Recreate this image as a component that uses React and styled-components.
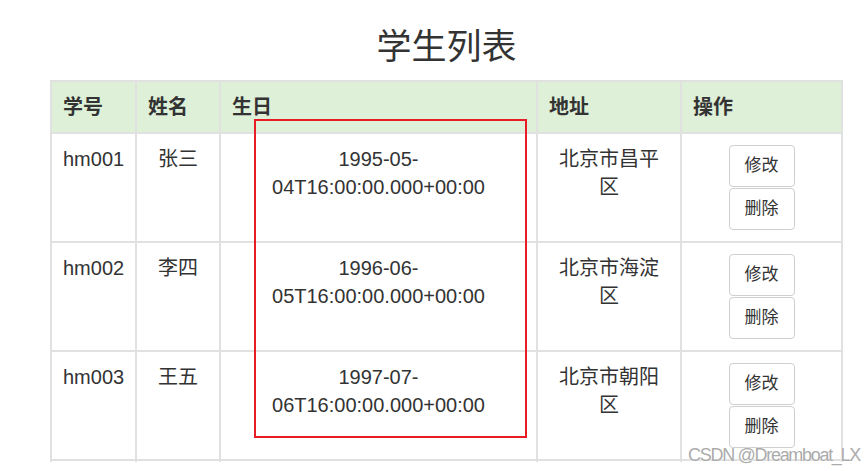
import React from "react";
import styled, { createGlobalStyle } from "styled-components";

const GlobalStyle = createGlobalStyle`
  *, *::before, *::after { box-sizing: border-box; }
  html, body { margin: 0; padding: 0; background: #fff; }
  body {
    font-family: "Liberation Sans", "Noto Sans CJK SC", Arial, sans-serif;
    color: #333;
  }
`;

const Page = styled.div`
  position: relative;
  width: 864px;
  height: 471px;
  overflow: hidden;
  background: #fff;
`;

const Title = styled.h2`
  margin: 0;
  padding-top: 28px;
  width: 793px;
  margin-left: 50px;
  text-align: center;
  font-size: 35px;
  line-height: 38px;
  font-weight: 400;
  color: #333;
`;

const TableClip = styled.div`
  margin-top: 14px;
  margin-left: 50px;
  width: 793px;
  height: 382px;
  overflow: hidden;
`;

const Table = styled.table`
  width: 793px;
  table-layout: fixed;
  border-collapse: separate;
  border-spacing: 0;
  border-left: 2px solid #e1e1e1;
  border-top: 2px solid #e1e1e1;
  font-size: 20px;
  line-height: 28px;
`;

const Th = styled.th`
  width: ${(p) => p.$w}px;
  padding: 11px 11px;
  text-align: left;
  font-weight: 700;
  background: #dff0d8;
  color: #333;
  border-right: 2px solid #e1e1e1;
  border-bottom: 2px solid #e1e1e1;
`;

const Td = styled.td`
  padding: 11px ${(p) => (p.$center ? 14 : 11)}px;
  text-align: ${(p) => (p.$center ? "center" : "left")};
  vertical-align: top;
  color: #333;
  border-right: 2px solid #e1e1e1;
  border-bottom: 2px solid #e1e1e1;
  height: ${(p) => (p.$h ? `${p.$h}px` : "auto")};
`;

const Actions = styled.div`
  display: flex;
  flex-direction: column;
  align-items: center;
  gap: 1px;
`;

const Button = styled.button`
  height: 42px;
  padding: 7px 15px;
  font-family: "Liberation Sans", "Noto Sans CJK SC", sans-serif;
  font-size: 17px;
  line-height: 26px;
  color: #333;
  background: #fff;
  border: 1px solid #cfcfcf;
  border-radius: 4px;
`;

const Highlight = styled.div`
  position: absolute;
  left: 254px;
  top: 119px;
  width: 273px;
  height: 319px;
  border: 2px solid #e81c24;
  pointer-events: none;
`;

const Watermark = styled.div`
  position: absolute;
  right: 4px;
  top: 445px;
  font-family: "Liberation Sans", Arial, sans-serif;
  font-size: 18px;
  line-height: 20px;
  letter-spacing: -1.3px;
  color: #ababab;
  text-shadow: 0 0 1px #fff, 0 0 1px #fff;
`;

const columns = [
  { label: "学号", w: 85 },
  { label: "姓名", w: 84 },
  { label: "生日", w: 317 },
  { label: "地址", w: 144 },
  { label: "操作", w: 161 },
];

const students = [
  { id: "hm001", name: "张三", d1: "1995-05-", d2: "04T16:00:00.000+00:00", addr: "北京市昌平区" },
  { id: "hm002", name: "李四", d1: "1996-06-", d2: "05T16:00:00.000+00:00", addr: "北京市海淀区" },
  { id: "hm003", name: "王五", d1: "1997-07-", d2: "06T16:00:00.000+00:00", addr: "北京市朝阳区" },
];

export default function App() {
  return (
    <>
      <GlobalStyle />
      <Page>
        <Title>学生列表</Title>
        <TableClip>
          <Table>
            <thead>
              <tr>
                {columns.map((c) => (
                  <Th key={c.label} $w={c.w}>{c.label}</Th>
                ))}
              </tr>
            </thead>
            <tbody>
              {students.map((s) => (
                <tr key={s.id}>
                  <Td>{s.id}</Td>
                  <Td $center>{s.name}</Td>
                  <Td $center>
                    {s.d1}
                    <wbr />
                    {s.d2}
                  </Td>
                  <Td $center>{s.addr}</Td>
                  <Td $center>
                    <Actions>
                      <Button>修改</Button>
                      <Button>删除</Button>
                    </Actions>
                  </Td>
                </tr>
              ))}
              <tr>
                <Td $h={40} />
                <Td $h={40} />
                <Td $h={40} />
                <Td $h={40} />
                <Td $h={40} />
              </tr>
            </tbody>
          </Table>
        </TableClip>
        <Highlight />
        <Watermark>CSDN @Dreamboat_LX</Watermark>
      </Page>
    </>
  );
}
